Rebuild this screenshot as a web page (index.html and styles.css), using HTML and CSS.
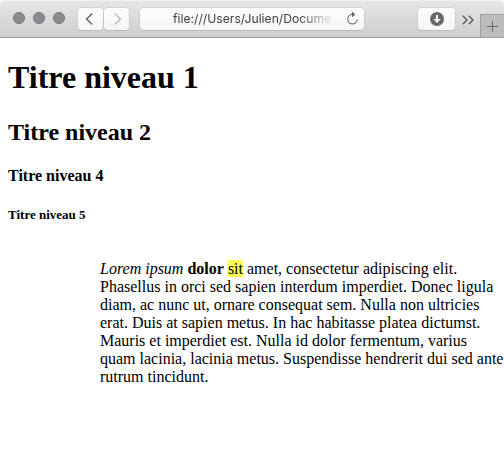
FILE: index.html
```html
<!DOCTYPE html>
<html lang="fr">
<head>
<meta charset="utf-8">
<title>Titres</title>
<link rel="stylesheet" href="styles.css">
</head>
<body>
<header class="toolbar">
  <div class="lights"><i></i><i></i><i></i></div>
  <div class="nav">
    <span class="button"><svg width="25" height="22" viewBox="0 0 25 22"><path d="M14.2 5.5 8.6 11l5.6 5.5" fill="none" stroke="#6b6b6b" stroke-width="1.5"/></svg></span>
    <span class="button"><svg width="25" height="22" viewBox="0 0 25 22"><path d="M10.8 5.5 16.4 11l-5.6 5.5" fill="none" stroke="#bdbdbd" stroke-width="1.5"/></svg></span>
  </div>
  <div class="address">
    <span class="url">file:///Users/Julien/Documen</span>
    <svg class="reload" width="13" height="15" viewBox="0 0 13 15"><path d="M7.2 3.3H6.3A4.8 4.8 0 1 0 11.3 8.2" fill="none" stroke="#777" stroke-width="1.2"/><path d="M6 .4 9.4 3.4 6 6.3z" fill="#666"/></svg>
  </div>
  <span class="button download"><svg width="14" height="14" viewBox="0 0 14 14"><circle cx="7" cy="7" r="7" fill="#686868"/><path d="M6 3h2v4h2.7L7 11 3.3 7H6z" fill="#fff"/></svg></span>
  <svg class="more" width="12" height="10" viewBox="0 0 12 10"><path d="m.8.8 4.1 4.2L.8 9.2M6.8.8 10.9 5 6.8 9.2" fill="none" stroke="#606060" stroke-width="1.5"/></svg>
  <span class="newtab"><svg width="11" height="11" viewBox="0 0 11 11"><path d="M5.5 0v11M0 5.5h11" stroke="#666" stroke-width="1"/></svg></span>
</header>
<main>
  <h1>Titre niveau 1</h1>
  <h2>Titre niveau 2</h2>
  <h4>Titre niveau 4</h4>
  <h5>Titre niveau 5</h5>
  <p><em>Lorem ipsum</em> <strong>dolor</strong> <mark>sit</mark> amet, consectetur adipiscing elit.<br>Phasellus in orci sed sapien interdum imperdiet. Donec ligula<br>diam, ac nunc ut, ornare consequat sem. Nulla non ultricies<br>erat. Duis at sapien metus. In hac habitasse platea dictumst.<br>Mauris et imperdiet est. Nulla id dolor fermentum, varius<br>quam lacinia, lacinia metus. Suspendisse hendrerit dui sed ante<br>rutrum tincidunt.</p>
</main>
</body>
</html>
```
FILE: styles.css
```css
* { box-sizing: border-box; }
body {
  margin: 0;
  height: 467px;
  overflow: hidden;
  background: #fff;
  color: #000;
  font-family: "Liberation Serif", "Times New Roman", serif;
  font-size: 16px;
}
svg { display: block; flex: none; }
.toolbar {
  display: flex;
  align-items: flex-start;
  height: 38px;
  padding: 7px 0 0 13px;
  border-top: 1px solid #f2f2f2;
  border-bottom: 1px solid #9b9b9b;
  border-radius: 5px 5px 0 0;
  background: linear-gradient(#e6e6e6, #cecece);
}
.lights { display: flex; gap: 8px; margin-top: 4px; }
.lights i {
  width: 12px;
  height: 12px;
  border: 1px solid #77777a;
  border-radius: 50%;
  background: #8b8b8f;
}
.nav { display: flex; gap: 1px; margin-left: 13px; }
.button {
  display: flex;
  align-items: center;
  justify-content: center;
  width: 25px;
  height: 22px;
  border-radius: 4px;
  background: linear-gradient(#fdfdfd, #f5f5f5);
  box-shadow: 0 0 0 .5px #c0c0c0, 0 1px 0 #b3b3b3;
}
.address {
  display: flex;
  align-items: center;
  width: 224px;
  height: 22px;
  margin-left: 11px;
  padding-left: 33px;
  border-radius: 4px;
  background: linear-gradient(#fdfdfd, #f5f5f5);
  box-shadow: 0 0 0 .5px #c0c0c0, 0 1px 0 #b3b3b3;
}
.url {
  width: 159px;
  white-space: nowrap;
  color: #404040;
  font: 12.2px/22px Inter, "Liberation Sans", sans-serif;
  -webkit-mask-image: linear-gradient(to right, #000 126px, transparent 161px);
  mask-image: linear-gradient(to right, #000 126px, transparent 161px);
}
.reload { margin-left: 14px; margin-top: -1px; }
.download { width: 37px; margin-left: 54px; }
.more { margin: 7px 0 0 7px; }
.newtab {
  display: flex;
  align-items: center;
  justify-content: center;
  width: 24px;
  height: 23px;
  margin: 6px 0 0 auto;
  border: 1px solid #a0a0a0;
  border-width: 1px 0 0 1px;
  background: #bcbcbc;
}
main { padding: 0 8px; }
h1, h2, h4, h5, p { margin: 0; white-space: nowrap; }
h1 { margin-top: 21px; font-size: 32px; line-height: 37px; }
h2 { margin-top: 22px; font-size: 24px; line-height: 28px; }
h4 { margin-top: 21px; font-size: 16px; line-height: 18px; }
h5 { margin-top: 22px; font-size: 13px; line-height: 16px; }
p { margin: 37px 0 0 92px; line-height: 18px; }
mark { background: #fffd54; color: #000; }
```
